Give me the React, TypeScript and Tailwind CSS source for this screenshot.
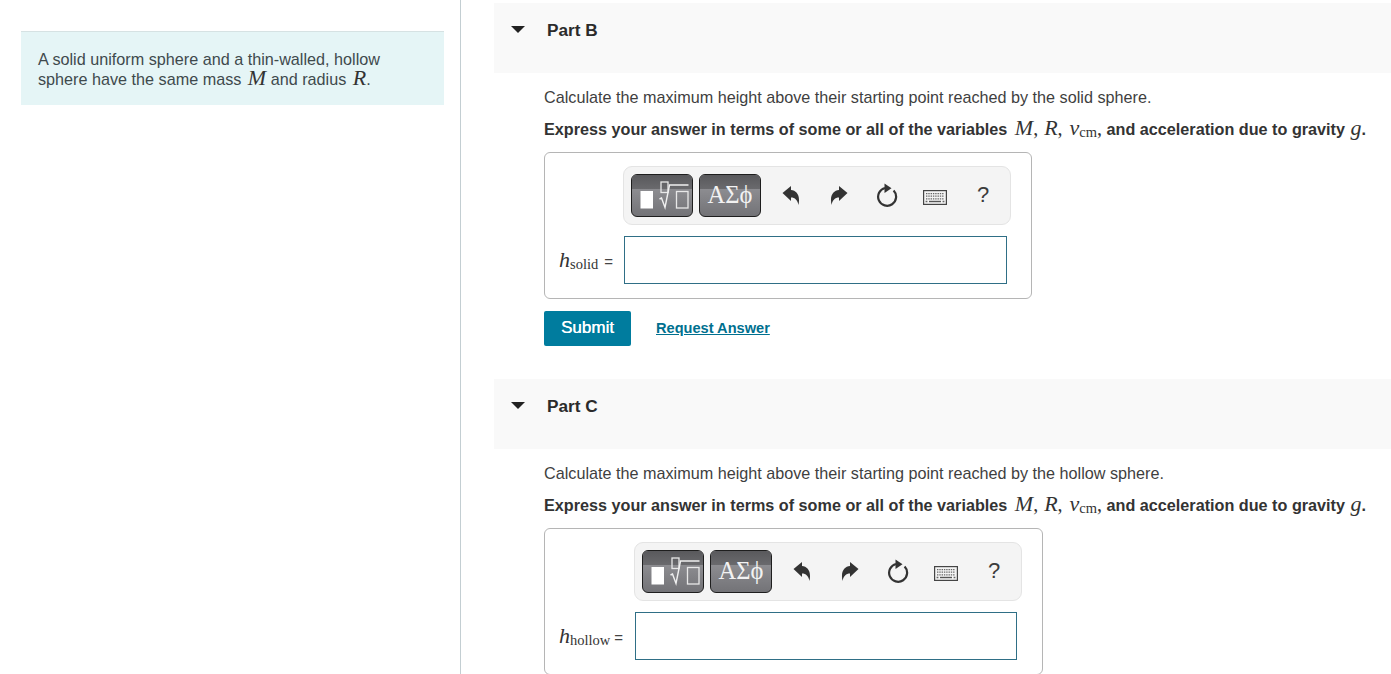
import React from "react";

const serif = "font-['Liberation_Serif','Times_New_Roman',serif]";

function MI({ children, className = "" }: { children: React.ReactNode; className?: string }) {
  return <span className={`${serif} italic font-normal text-[22px] leading-[0] text-[#333] ${className}`}>{children}</span>;
}

function Punct({ className = "mr-[6px]" }: { className?: string }) {
  return <span className={`${serif} font-normal text-[20px] leading-[0] ${className}`}>,</span>;
}

function TemplateIcon() {
  return (
    <svg width="60" height="41" viewBox="1 1 60 41" className="absolute left-0 top-0" fill="none">
      <rect x="9.5" y="17" width="12.5" height="17.5" fill="#fff" />
      <rect x="30" y="8" width="7" height="10.5" stroke="#e8e8e8" strokeWidth="1.3" />
      <path d="M28.5 25 L30.5 24 L34 33.5 L38.5 11 L57.5 11" stroke="#f0f0f0" strokeWidth="1.4" />
      <rect x="45.5" y="17.5" width="11.5" height="16.5" stroke="#e8e8e8" strokeWidth="1.3" />
    </svg>
  );
}

function Undo({ flip = false }: { flip?: boolean }) {
  return (
    <svg width="18" height="21" viewBox="0 0 18 21" className={flip ? "-scale-x-100" : ""}>
      <path d="M0.5 8 L9 1 V5 C14.5 5.5 18.5 10 16.5 20 C15.5 15 13 12.5 9 12.5 V16 Z" fill="#333" />
    </svg>
  );
}

function Reset() {
  return (
    <svg width="22" height="25" viewBox="0 0 22 25" fill="none">
      <path d="M9 5 A9 9 0 1 0 17.6 7.5" stroke="#333" strokeWidth="2.2" />
      <path d="M8.5 0.5 L15.5 5.2 L8.5 10 Z" fill="#333" />
    </svg>
  );
}

function Keyboard() {
  return (
    <svg width="24" height="15" viewBox="0 0 24 15" fill="none">
      <rect x="0.6" y="0.6" width="22.8" height="13.8" fill="#f4f4f4" stroke="#444" strokeWidth="1.2" />
      <path d="M3 3.6 H21 M3 6.2 H21 M3 8.8 H21" stroke="#666" strokeWidth="1.3" strokeDasharray="1.4 0.9" />
      <path d="M6 11.5 H18" stroke="#555" strokeWidth="1.4" />
      <path d="M2.6 11.5 H4.4 M19.6 11.5 H21.4" stroke="#666" strokeWidth="1.3" />
    </svg>
  );
}

function PaletteButton({ children }: { children: React.ReactNode }) {
  return (
    <div className="relative w-[62px] h-[43px] rounded-[6px] border border-[#1e1e1e] overflow-hidden bg-gradient-to-b from-[#9a9a9e] to-[#737377]">
      <div className="absolute inset-x-0 top-0 h-[14px] bg-gradient-to-b from-[#59595c] to-[#6a6a6d]" />
      {children}
    </div>
  );
}

function AnswerBox({ sub, boxW, inputW, labelW, toolbarMl, labelGap }: { sub: string; boxW: string; inputW: string; labelW: string; toolbarMl: string; labelGap: string }) {
  return (
    <div className={`${boxW} h-[147px] mt-[13px] border border-[#b5b5b5] rounded-[6px] pt-[13px] pl-[14px]`}>
      <div className={`${toolbarMl} w-[388px] h-[59px] bg-[#f4f4f4] border border-[#e4e4e4] rounded-[9px] flex items-center pl-[7px]`}>
        <div className="flex gap-[6px]">
          <PaletteButton><TemplateIcon /></PaletteButton>
          <PaletteButton>
            <span className={`absolute inset-0 flex items-center justify-center ${serif} text-[24.5px] text-[#f2f2f2] leading-none`}>ΑΣϕ</span>
          </PaletteButton>
        </div>
        <div className="flex items-center ml-[6px]">
          <div className="w-[48px] flex justify-center"><Undo /></div>
          <div className="w-[48px] flex justify-center"><Undo flip /></div>
          <div className="w-[48px] flex justify-center"><Reset /></div>
          <div className="w-[48px] flex justify-center pt-[4px]"><Keyboard /></div>
          <div className="w-[48px] flex justify-center text-[22px] leading-none text-[#3c3c3c] pb-[1px]">?</div>
        </div>
      </div>
      <div className="flex items-center mt-[11px]">
        <div className={`${labelW} flex items-baseline text-[#333] whitespace-nowrap`}>
          <MI className="leading-none">h</MI>
          <span className={`${serif} text-[14.5px] leading-none relative top-[2px]`}>{sub}</span>
          <span className={`${labelGap} text-[15px] leading-none text-[#444]`}>=</span>
        </div>
        <div className={`${inputW} h-[48px] bg-white border border-[#2f6f86]`} />
      </div>
    </div>
  );
}

function Part({ name, what, sub, boxW, inputW, labelW, toolbarMl, labelGap, footer }: { name: string; what: string; sub: string; boxW: string; inputW: string; labelW: string; toolbarMl: string; labelGap: string; footer?: boolean }) {
  return (
    <section>
      <div className="h-[70px] bg-[#f9f9f9] flex items-start">
        <div className="ml-[17px] mt-[23px] w-0 h-0 border-x-[7px] border-x-transparent border-t-[7px] border-t-[#222]" />
        <h2 className="ml-[22px] mt-[17px] text-[17.2px] leading-[20px] font-bold text-[#2b2b2b]">{name}</h2>
      </div>
      <div className="pl-[50px]">
        <p className="mt-[14px] h-[20px] text-[16.2px] leading-[20px] text-[#3f3f3f] whitespace-nowrap">
          Calculate the maximum height above their starting point reached by the {what} sphere.
        </p>
        <p className="mt-[12px] h-[20px] text-[16.2px] leading-[20px] font-bold text-[#333] whitespace-nowrap">
          Express your answer in terms of some or all of the variables{" "}
          <MI className="ml-[3px]">M</MI><Punct /><MI>R</MI><Punct className="mr-[7px]" /><MI>v</MI>
          <span className={`${serif} font-normal text-[14.5px] leading-[0] relative top-[2px]`}>cm</span>
          <Punct className="mr-[4.5px]" />and acceleration due to gravity <MI className="ml-[1px]">g</MI>.
        </p>
        <AnswerBox sub={sub} boxW={boxW} inputW={inputW} labelW={labelW} toolbarMl={toolbarMl} labelGap={labelGap} />
        {footer && (
          <div className="flex items-center mt-[12px] h-[35px] mb-[33px]">
            <button className="w-[87px] h-[35px] pb-[2px] bg-[#007c9e] rounded-[2px] text-white text-[17px] font-normal [text-shadow:0.2px_0_0_#fff]">Submit</button>
            <a href="#" className="ml-[25px] text-[14.6px] font-bold text-[#00708f] underline">Request Answer</a>
          </div>
        )}
      </div>
    </section>
  );
}

export default function App() {
  return (
    <div className="flex h-[674px] overflow-hidden bg-white font-['Liberation_Sans',Arial,sans-serif]">
      <aside className="w-[461px] shrink-0 border-r border-[#c3ced2] pt-[31px] pl-[21px]">
        <div className="w-[423px] h-[74px] bg-[#e5f5f6] border-t border-[#d6e2e3] pt-[17px] pl-[17px] text-[16.2px] leading-[20px] text-[#3f4a4d]">
          A solid uniform sphere and a thin-walled, hollow
          <br />
          sphere have the same mass <MI className="ml-[2px] text-[#3f4a4d]">M</MI> and radius <MI className="ml-[2px] text-[#3f4a4d]">R</MI>.
        </div>
      </aside>
      <main className="flex-1 pl-[33px] pt-[3px]">
        <Part name="Part B" what="solid" sub="solid" boxW="w-[488px]" inputW="w-[383px]" labelW="w-[65px]" toolbarMl="ml-[64px]" labelGap="ml-[6px]" footer />
        <Part name="Part C" what="hollow" sub="hollow" boxW="w-[499px]" inputW="w-[382px]" labelW="w-[76px]" toolbarMl="ml-[75px]" labelGap="ml-[4px]" />
      </main>
    </div>
  );
}
